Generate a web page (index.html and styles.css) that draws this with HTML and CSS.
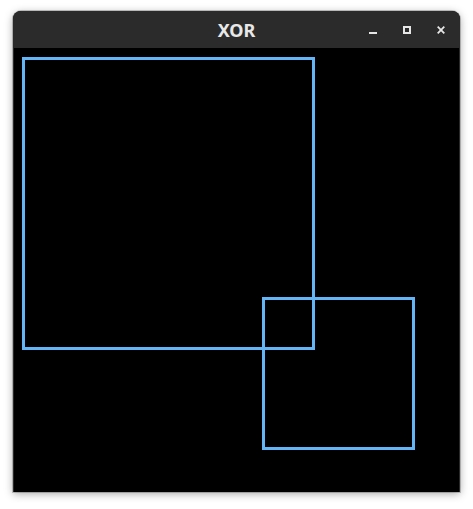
FILE: index.html
```html
<!DOCTYPE html>
<html>
<head>
<meta charset="utf-8">
<link rel="stylesheet" href="styles.css">
</head>
<body>
<div class="window">
  <div class="titlebar">
    <div class="title">XOR</div>
    <div class="controls">
      <span class="btn"><svg width="8" height="8" viewBox="0 0 8 8"><rect x="0" y="6" width="8" height="2" fill="#e6e6e6"/></svg></span>
      <span class="btn"><svg width="8" height="8" viewBox="0 0 8 8"><rect x="1" y="1" width="6" height="6" fill="none" stroke="#e6e6e6" stroke-width="2"/></svg></span>
      <span class="btn"><svg width="8" height="8" viewBox="0 0 8 8"><path d="M0.7 0.7 L7.3 7.3 M7.3 0.7 L0.7 7.3" stroke="#e6e6e6" stroke-width="1.8"/></svg></span>
    </div>
  </div>
  <div class="canvas">
    <svg width="447" height="444" viewBox="0 0 447 444">
      <rect x="10.5" y="10.5" width="290" height="290" fill="none" stroke="#64b5f6" stroke-width="3"/>
      <rect x="250.5" y="250.5" width="150" height="150" fill="none" stroke="#64b5f6" stroke-width="3"/>
    </svg>
  </div>
</div>
</body>
</html>
```
FILE: styles.css
```css
html, body {
  margin: 0;
  padding: 0;
  background: #ffffff;
}
body {
  padding: 11px 13px;
}
.window {
  width: 447px;
  height: 481px;
  border-radius: 8px 8px 0 0;
  overflow: hidden;
  background: #000;
  box-shadow: 0 2px 8px rgba(0,0,0,0.35), 0 0 0 1px rgba(0,0,0,0.2);
  display: flex;
  flex-direction: column;
}
.titlebar {
  height: 37px;
  flex: none;
  background: #2b2b2b;
  position: relative;
  display: flex;
  align-items: center;
  justify-content: center;
}
.title {
  font-family: "Noto Sans", "Open Sans", sans-serif;
  font-weight: bold;
  font-size: 18px;
  color: #e8e8e8;
  line-height: 1;
  margin-top: 1px;
}
.controls {
  position: absolute;
  right: 15px;
  top: 15px;
  display: flex;
  gap: 26px;
}
.btn {
  width: 8px;
  height: 8px;
  display: block;
}
.btn svg {
  display: block;
}
.canvas {
  flex: 1;
  background: #000;
  border-left: 1px solid #2a2a2a;
  border-right: 1px solid #2a2a2a;
  border-bottom: 1px solid #2a2a2a;
}
.canvas svg {
  display: block;
  margin-left: -1px;
}
```
